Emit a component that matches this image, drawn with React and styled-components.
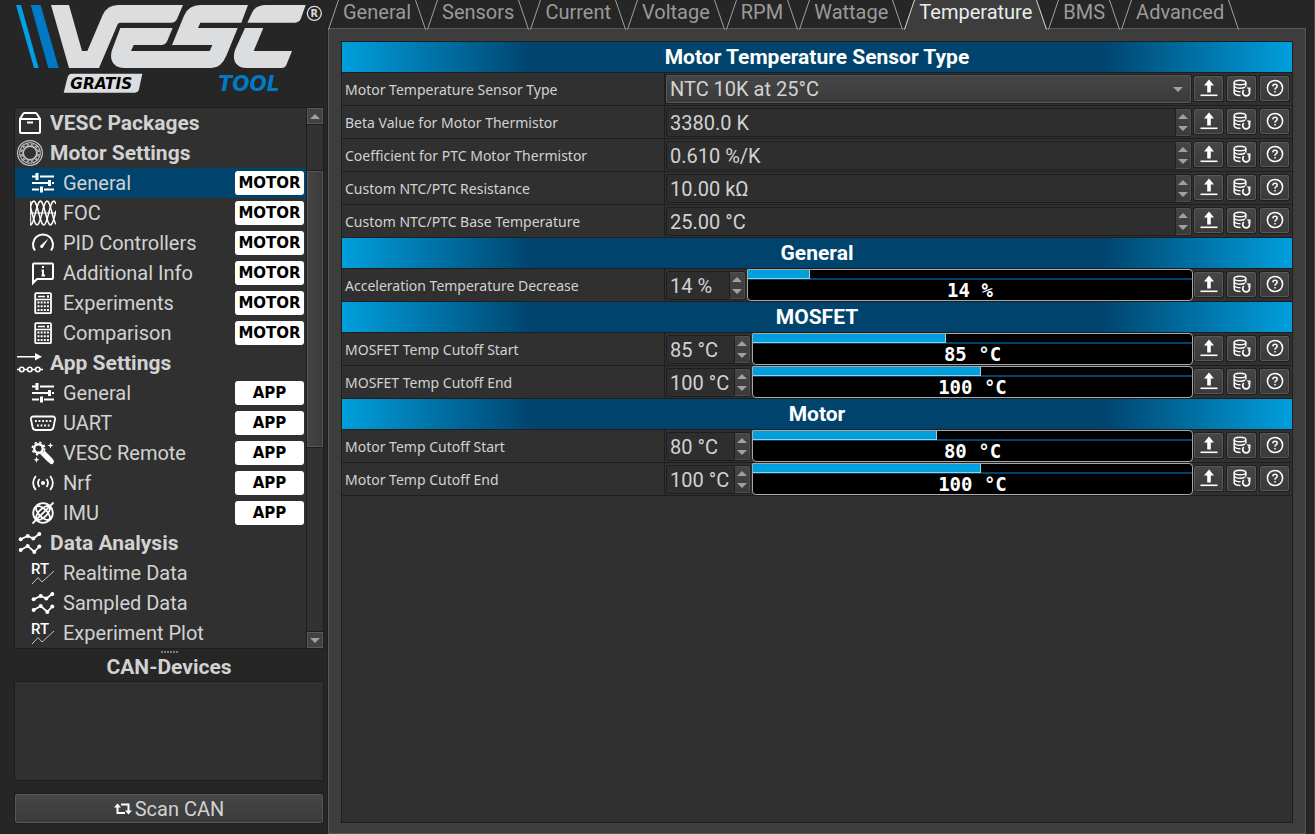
import React, { useState } from "react";
import styled, { createGlobalStyle, css } from "styled-components";

const c = {
  window: "#262626",
  pane: "#3d3d3d",
  field: "#303030",
  line: "#1e1e1e",
  edge: "#585858",
  text: "#d2d2d2",
  dim: "#9a9a9a",
  accent: "#009fdd",
  navy: "#00446e",
};

const GlobalStyle = createGlobalStyle`
  *, *::before, *::after { box-sizing: border-box; }
  body {
    margin: 0;
    background: ${c.window};
    color: ${c.text};
    font-family: Roboto, "Liberation Sans", sans-serif;
    font-size: 20px;
    line-height: 24px;
  }
  button, input, select { font: inherit; color: inherit; margin: 0; }
`;

const Window = styled.div`
  display: grid;
  grid-template-columns: 328px minmax(0, 1fr);
  min-height: 100vh;
`;

/* ---------- sidebar ---------- */

const Sidebar = styled.aside`
  display: flex;
  flex-direction: column;
  padding: 0 4px 10px 14px;
`;

const LogoLink = styled.a`
  display: block;
  height: 107px;
  svg { display: block; }
`;

const TreeFrame = styled.div`
  display: flex;
  border: 1px solid ${c.line};
  background: ${c.field};
`;

const Tree = styled.nav`
  flex: 1;
  min-width: 0;
`;

const TreeItem = styled.a`
  display: flex;
  align-items: center;
  gap: 7px;
  height: 30px;
  padding: 0 2px 0 ${(p) => (p.$top ? 2 : 15)}px;
  color: ${c.text};
  text-decoration: none;
  font-size: ${(p) => (p.$top ? 21 : 20)}px;
  font-weight: ${(p) => (p.$top ? 700 : 400)};
  background: ${(p) => (p.$active ? c.navy : "transparent")};
  svg { flex: none; }
`;

const TreeText = styled.span`
  flex: 1;
  white-space: nowrap;
`;

const Badge = styled.span`
  width: 69px;
  height: 24px;
  border-radius: 3px;
  background: #fff;
  color: #000;
  font: 700 15px/24px "DejaVu Sans", sans-serif;
  text-align: center;
`;

const ScrollBar = styled.div`
  display: flex;
  flex-direction: column;
  width: 17px;
  border-left: 1px solid ${c.line};
  background: #323232;
`;

const ScrollArrow = styled.button`
  display: grid;
  place-items: center;
  height: 16px;
  padding: 0;
  border: 1px solid ${c.edge};
  background: #424242;
`;

const ScrollTrack = styled.div`
  flex: 1;
  display: flex;
  flex-direction: column;
  padding-top: 46px;
  border: solid ${c.line};
  border-width: 1px 0;
`;

const ScrollThumb = styled.div`
  height: 60%;
  border: 1px solid ${c.edge};
  background: linear-gradient(90deg, #454545, #3b3b3b);
  box-shadow: 0 1px 0 ${c.line}, 0 -1px 0 ${c.line};
`;

const Splitter = styled.div`
  align-self: center;
  width: 17px;
  height: 2px;
  margin: 2px 0;
  background: repeating-linear-gradient(90deg, #7c7c7c 0 2px, transparent 2px 3px);
`;

const CanTitle = styled.h2`
  margin: 0;
  padding-bottom: 2px;
  font-size: 21px;
  line-height: 24px;
  text-align: center;
`;

const CanList = styled.div`
  flex: 1;
  min-height: 80px;
  margin-bottom: 12px;
  border: 1px solid ${c.line};
  background: ${c.field};
`;

const raised = css`
  border: 1px solid ${c.edge};
  border-radius: 2px;
  background: linear-gradient(#464646, #3a3a3a);
  box-shadow: 0 0 0 1px ${c.line};
`;

const ScanButton = styled.button`
  ${raised}
  display: flex;
  align-items: center;
  justify-content: center;
  gap: 3px;
  height: 29px;
  margin: 1px;
  padding: 0;
`;

/* ---------- tabs ---------- */

const Main = styled.main`
  display: flex;
  flex-direction: column;
  padding-right: 8px;
  border-right: 1px solid #4a4a4a;
`;

const TabBar = styled.div`
  display: flex;
  gap: 1px;
  height: 29px;
  position: relative;
  margin-bottom: -1px;
`;

const TabButton = styled.button`
  display: flex;
  height: 30px;
  padding: 0;
  border: 0;
  background: none;
  color: ${(p) => (p.$active ? "#ececec" : c.dim)};
  svg { flex: none; }
`;

const TabText = styled.span`
  height: 30px;
  padding: 0 4px 6px;
  background: ${(p) => (p.$active ? c.pane : "transparent")};
`;

const Pane = styled.div`
  flex: 1;
  display: flex;
  padding: 12px 12px 10px;
  border: 1px solid ${c.edge};
  background: ${c.pane};
  box-shadow: 1px 0 0 ${c.line}, -1px 0 0 ${c.line};
`;

const Sheet = styled.div`
  flex: 1;
  min-width: 0;
  border: 1px solid ${c.line};
  background: ${c.field};
`;

/* ---------- parameter rows ---------- */

const GroupHeader = styled.h3`
  height: 31px;
  margin: 0;
  border-bottom: 1px solid ${c.line};
  background: linear-gradient(90deg, ${c.accent}, ${c.navy} 20%, ${c.navy} 80%, ${c.accent});
  color: #fff;
  font-size: 21px;
  line-height: 30px;
  text-align: center;
`;

const Row = styled.div`
  display: grid;
  grid-template-columns: 323px minmax(0, 1fr) 99px;
  height: 33px;
  border-bottom: 1px solid ${c.line};
`;

const RowLabel = styled.label`
  padding: 1px 0 0 3px;
  border-right: 1px solid ${c.line};
  font: 14px/31px "Noto Sans", "Open Sans", sans-serif;
`;

const Editor = styled.div`
  display: flex;
  align-items: center;
  padding-left: 1px;
`;

const SelectWrap = styled.div`
  ${raised}
  flex: 1;
  display: grid;
  align-items: center;
  height: 28px;
  margin-right: 2px;
  > * { grid-area: 1 / 1; }
  svg { justify-self: end; margin-right: 7px; pointer-events: none; }
`;

const SelectBox = styled.select`
  width: 100%;
  height: 26px;
  padding: 0 3px;
  border: 0;
  background: transparent;
  appearance: none;
`;

const SpinFrame = styled.div`
  display: flex;
  flex: ${(p) => (p.$width ? `0 0 ${p.$width}px` : "1")};
  min-width: 0;
  height: 29px;
  margin: 1px 1px 0 0;
  border: 1px solid ${c.line};
  border-radius: 3px;
  background: #2e2e2e;
`;

const SpinInput = styled.input`
  flex: 1;
  width: 100%;
  min-width: 0;
  padding: 0 0 0 3px;
  border: 0;
  background: transparent;
  outline: 0;
`;

const SpinArrows = styled.div`
  flex: none;
  display: flex;
  flex-direction: column;
  width: 16px;
  border: 1px solid #505050;
  border-left-color: ${c.line};
  border-radius: 0 2px 2px 0;
  background: linear-gradient(#454545, #3a3a3a);
`;

const SpinArrow = styled.button`
  flex: 1;
  display: grid;
  place-items: center;
  padding: 0;
  border: 0;
  background: none;
`;

const Gauge = styled.div`
  flex: 1;
  height: 32px;
  overflow: hidden;
  border: 1px solid #a8a8a8;
  border-radius: 1px 4px 4px 4px;
  background: #000;
`;

const GaugeTrack = styled.div`
  display: flex;
  height: 10px;
  border-bottom: 2px solid ${c.navy};
`;

const GaugeFill = styled.div`
  height: 9px;
  border: 1px solid #a9cbd9;
  border-width: 0 1px 1px 0;
  background: ${c.accent};
`;

const GaugeText = styled.div`
  color: #fff;
  font: 700 19px/20px "DejaVu Sans Mono", monospace;
  text-align: center;
  white-space: pre;
`;

const Tools = styled.div`
  display: flex;
  gap: 4px;
  padding: 3px 0 0 1px;
`;

const ToolButton = styled.button`
  ${raised}
  display: grid;
  place-items: center;
  width: 29px;
  height: 25px;
  padding: 0 0 1px;
`;

/* ---------- drawings ---------- */

const Stroke = ({ size = 26, w = 2, children }) => (
  <svg width={size} height={size} viewBox={`0 0 ${size} ${size}`} fill="none" stroke="#fff" strokeWidth={w} aria-hidden="true">
    {children}
  </svg>
);

const Triangle = ({ down }) => (
  <svg width="10" height="5" viewBox="0 0 10 5" aria-hidden="true">
    <path d={down ? "M0 0H10L5 5Z" : "M0 5H10L5 0Z"} fill="#a0a0a0" />
  </svg>
);

const sine = (phase) => {
  let d = "";
  for (let x = 0; x <= 26; x += 1) {
    const y = 13 - 12 * Math.sin((x / 20) * 2 * Math.PI + phase);
    d += `${x ? "L" : "M"}${x} ${y.toFixed(1)}`;
  }
  return d;
};

const icons = {
  box: (
    <Stroke>
      <path d="M3 9V22Q3 23 4 23H22Q23 23 23 22V9ZM3 9L6 4Q6.500 3 7.500 3H18.500Q19.500 3 20 4L23 9M10 12.500H16" />
    </Stroke>
  ),
  stator: (
    <Stroke w={1}>
      <g stroke="#c4c4c4">
        <circle cx="13" cy="13" r="12.400" strokeWidth="1.200" />
        <circle cx="13" cy="13" r="6.600" strokeWidth="1.200" />
        {Array.from({ length: 12 }, (_, i) => (
          <path key={i} d="M10.800 2.800H15.200L14 6H12Z" transform={`rotate(${i * 30} 13 13)`} />
        ))}
      </g>
    </Stroke>
  ),
  sliders: (
    <Stroke>
      <path d="M2 6.500H6M10 6.500H24M2 13H17M22 13H24M2 19.500H9M14 19.500H24" />
      <path d="M7 3V10M19.500 10V16M11.500 16.500V22.500" strokeWidth="3" />
      <path d="M17 13H20" />
    </Stroke>
  ),
  waves: (
    <Stroke w={1.5}>
      <path d={sine(0.4)} />
      <path d={sine(0.4 + 2.094)} />
      <path d={sine(0.4 + 4.189)} />
      <path d="M.700 1V25M0 13H26" strokeWidth="1" />
    </Stroke>
  ),
  gauge: (
    <Stroke>
      <path d="M5 20.500A10 10 0 1 1 21 20.500" />
      <path d="M10.500 15.500L18.500 8.500L12.800 17.500Q11.500 18.500 10.600 17.500Q9.900 16.500 10.500 15.500Z" fill="#fff" stroke="none" />
    </Stroke>
  ),
  info: (
    <Stroke>
      <path d="M3 23V4.500Q3 3.500 4 3.500H22Q23 3.500 23 4.500V18Q23 19 22 19H7Z" />
      <path d="M13 6V8M11.500 10.500H13V15M11.500 15.500H15" />
    </Stroke>
  ),
  calculator: (
    <Stroke>
      <rect x="5.200" y="3.200" width="15.800" height="20" rx="1" strokeWidth="1.800" />
      <path d="M5 9.500H21M8 6.500H15" strokeWidth="1.400" />
      <path d="M17 6.500H19" strokeWidth="2.400" />
      <path d="M7.500 12.500H19M7.500 16.200H19M7.500 19.900H19" strokeWidth="2" strokeDasharray="2 1.150" />
    </Stroke>
  ),
  flow: (
    <Stroke w={1.6}>
      <path d="M0 6.700H20M0 19.500H2.500M7 19.500H10.500M15 19.500H18.500M23 19.500H26" />
      <path d="M18 3L25 6.700L18 10.500Z" fill="#fff" stroke="none" />
      <circle cx="4.800" cy="19.500" r="2.200" />
      <circle cx="12.800" cy="19.500" r="2.200" />
      <circle cx="20.800" cy="19.500" r="2.200" />
    </Stroke>
  ),
  port: (
    <Stroke w={1.8}>
      <path d="M3.500 6.500H22.500Q25.500 6.500 25 9.500L23.500 17Q23 20 20 20H6Q3 20 2.500 17L1 9.500Q.500 6.500 3.500 6.500Z" />
      <path d="M5 11H21.500" strokeDasharray="1.800 1.800" />
      <path d="M7 15.500H19.500" strokeDasharray="1.800 1.800" />
    </Stroke>
  ),
  wand: (
    <Stroke>
      <circle cx="8.500" cy="8.500" r="4.300" strokeWidth="2.400" />
      <circle cx="8.500" cy="8.500" r="6.200" strokeWidth="1.600" strokeDasharray="2.400 2.470" />
      <path d="M12.500 12.500L20.500 20.500" strokeWidth="5.500" />
      <path d="M20.500 20.500L21.500 21.500" strokeWidth="5" strokeLinecap="round" />
      <path d="M20.500 2.500L21.300 4.700L23.500 5.500L21.300 6.300L20.500 8.500L19.700 6.300L17.500 5.500L19.700 4.700ZM6.500 16.500L7.300 18.900L9.500 19.700L7.300 20.500L6.500 23L5.700 20.500L3.500 19.700L5.700 18.900Z" fill="#fff" stroke="none" />
    </Stroke>
  ),
  radio: (
    <Stroke w={1.8}>
      <circle cx="13" cy="13" r="2" fill="#fff" stroke="none" />
      <path d="M9.500 9Q6.500 13 9.500 17M16.500 9Q19.500 13 16.500 17M5.800 6Q.500 13 5.800 20M20.200 6Q25.500 13 20.200 20" />
    </Stroke>
  ),
  gyro: (
    <Stroke w={1.8}>
      <circle cx="13" cy="13" r="9.800" />
      <ellipse cx="13" cy="13" rx="9" ry="4" transform="rotate(45 13 13)" />
      <ellipse cx="13" cy="13" rx="9" ry="4" transform="rotate(-45 13 13)" />
      <path d="M2.500 23.500L23.500 2.500" />
    </Stroke>
  ),
  lines: (
    <Stroke w={1.8}>
      <path d="M3.700 9.300L10.700 6L16.300 8.500L22.300 4M3.700 20L10.700 16L17.300 21.800L22.300 16.500" />
      <g fill="#fff" stroke="none">
        {[[3.7, 9.3], [10.7, 6], [16.3, 8.5], [22.3, 4], [3.7, 20], [10.7, 16], [17.3, 22], [22.3, 16.5]].map(([x, y]) => (
          <circle key={x + "-" + y} cx={x} cy={y} r="2" />
        ))}
      </g>
    </Stroke>
  ),
  realtime: (
    <Stroke w={1}>
      <text x="1" y="14" fill="#fff" stroke="none" fontFamily="Roboto, sans-serif" fontWeight="500" fontSize="15">RT</text>
      <path d="M2 24L8 17.700L12 22L24 11" stroke="#c0c0c0" />
    </Stroke>
  ),
};

const UploadIcon = () => (
  <Stroke size={18} w={1.6}>
    <path d="M9 .500L14 6.500H10.800V13.500H7.200V6.500H4Z" fill="#fff" stroke="none" />
    <path d="M.500 16.300H17.500" />
  </Stroke>
);

const RestoreIcon = () => (
  <Stroke size={18} w={1.5}>
    <ellipse cx="7" cy="3.500" rx="5.800" ry="2.300" />
    <path d="M1.200 3.500V14Q2 16.500 7.500 16.500M12.800 3.500V7.500M1.200 7Q2.500 9.300 7 9.300Q10 9.300 12 8M1.200 10.500Q2.500 12.800 7.500 12.800" />
    <path d="M10.800 11A3.400 3.400 0 1 0 15.500 11" strokeWidth="1.700" />
    <path d="M13.500 8.500H17.500V12.500Z" fill="#fff" stroke="none" />
  </Stroke>
);

const HelpIcon = () => (
  <Stroke size={18} w={1.5}>
    <circle cx="9" cy="9" r="7.600" />
    <path d="M6.800 7.400Q6.900 5.200 9 5.200Q11.200 5.200 11.200 7.100Q11.200 8.200 10 8.900Q9 9.500 9 10.800M9 12V13.600" />
  </Stroke>
);

const ScanIcon = () => (
  <svg width="18" height="12" viewBox="0 0 18 12" fill="none" stroke="#fff" strokeWidth="2" aria-hidden="true">
    <path d="M3.500 3V10H11M7 1.500H14.500V8.500" />
    <path d="M0 4.500L3.500 .500L7 4.500ZM11 7.500H18L14.500 11.500Z" fill="#fff" stroke="none" />
  </svg>
);

const Slant = ({ side, active }) => {
  const left = side === "left";
  return (
    <svg width="11" height="30" viewBox="0 0 11 30" aria-hidden="true">
      {active && <path d={left ? "M.500 30L10.500 0H11V30Z" : "M0 0H.500L10.500 30H0Z"} fill={c.pane} />}
      <path d={left ? "M.500 29.500L10.500 0" : "M.500 0L10.500 29.500"} stroke={active ? "#dcdcdc" : "#a0a0a0"} strokeWidth="1" />
    </svg>
  );
};

const Logo = () => (
  <svg width="312" height="100" viewBox="42 0 936 300" role="img" aria-label="VESC Tool">
    <path d="M48 15H63L116 204H102Z" fill="#00a0e4" />
    <path d="M92 15H122L176 204H145Z" fill="#007ac6" />
    <g fill="#dcdddf">
      <path d="M153 15H207L246 153H262L308 45Q322 15 354 15H549L531 57Q526 68 514 68H360Q355 68 353 73L297 204H207Z" />
      <path d="M361 84H518L502 122Q496 135 484 135H401L393 153H629L637 135H516L552 47Q566 15 600 15H744L724 68H601L594 84H713L680 165Q664 204 634 204H372C340 204 325 178 338 145Z" />
      <path d="M742 68L756 38Q767 15 798 15H917L903 55Q898 68 885 68Z" />
      <path d="M735 84H790L761 153H876L859 195Q855 204 845 204H740C708 204 694 180 706 148Z" />
      <path d="M203 231Q206 221 215 221H427L417 268Q414 278 405 278H191Z" />
    </g>
    <circle cx="943" cy="40" r="21" fill="none" stroke="#dcdddf" strokeWidth="4" />
    <g fontFamily="'DejaVu Sans', sans-serif" fontWeight="700">
      <text x="943" y="51" fontSize="29" textAnchor="middle" fill="#dcdddf">R</text>
      <text x="211" y="266" fontSize="46" fontStyle="italic" fill="#000">GRATIS</text>
      <text x="655" y="272" fontSize="61" fontStyle="italic" fill="#007ac6">TOOL</text>
    </g>
  </svg>
);

/* ---------- content ---------- */

const tree = [
  { icon: "box", text: "VESC Packages", top: true },
  { icon: "stator", text: "Motor Settings", top: true },
  { icon: "sliders", text: "General", badge: "MOTOR", active: true },
  { icon: "waves", text: "FOC", badge: "MOTOR" },
  { icon: "gauge", text: "PID Controllers", badge: "MOTOR" },
  { icon: "info", text: "Additional Info", badge: "MOTOR" },
  { icon: "calculator", text: "Experiments", badge: "MOTOR" },
  { icon: "calculator", text: "Comparison", badge: "MOTOR" },
  { icon: "flow", text: "App Settings", top: true },
  { icon: "sliders", text: "General", badge: "APP" },
  { icon: "port", text: "UART", badge: "APP" },
  { icon: "wand", text: "VESC Remote", badge: "APP" },
  { icon: "radio", text: "Nrf", badge: "APP" },
  { icon: "gyro", text: "IMU", badge: "APP" },
  { icon: "lines", text: "Data Analysis", top: true },
  { icon: "realtime", text: "Realtime Data" },
  { icon: "lines", text: "Sampled Data" },
  { icon: "realtime", text: "Experiment Plot" },
];

const tabs = ["General", "Sensors", "Current", "Voltage", "RPM", "Wattage", "Temperature", "BMS", "Advanced"];

const groups = [
  {
    title: "Motor Temperature Sensor Type",
    rows: [
      { id: "sensor", label: "Motor Temperature Sensor Type", options: ["NTC 10K at 25°C"] },
      { id: "beta", label: "Beta Value for Motor Thermistor", value: "3380.0 K" },
      { id: "coeff", label: "Coefficient for PTC Motor Thermistor", value: "0.610 %/K" },
      { id: "res", label: "Custom NTC/PTC Resistance", value: "10.00 kΩ" },
      { id: "base", label: "Custom NTC/PTC Base Temperature", value: "25.00 °C" },
    ],
  },
  {
    title: "General",
    rows: [{ id: "acc", label: "Acceleration Temperature Decrease", value: "14 %", width: 80, fill: 14 }],
  },
  {
    title: "MOSFET",
    rows: [
      { id: "fet-start", label: "MOSFET Temp Cutoff Start", value: "85 °C", width: 85, fill: 44 },
      { id: "fet-end", label: "MOSFET Temp Cutoff End", value: "100 °C", width: 85, fill: 52 },
    ],
  },
  {
    title: "Motor",
    rows: [
      { id: "mot-start", label: "Motor Temp Cutoff Start", value: "80 °C", width: 85, fill: 42 },
      { id: "mot-end", label: "Motor Temp Cutoff End", value: "100 °C", width: 85, fill: 52 },
    ],
  },
];

const SpinBox = ({ id, value, width }) => (
  <SpinFrame $width={width}>
    <SpinInput id={id} type="text" defaultValue={value} />
    <SpinArrows>
      <SpinArrow type="button" aria-label="Increase"><Triangle /></SpinArrow>
      <SpinArrow type="button" aria-label="Decrease"><Triangle down /></SpinArrow>
    </SpinArrows>
  </SpinFrame>
);

const ParamRow = ({ id, label, options, value, width, fill }) => (
  <Row>
    <RowLabel htmlFor={id}>{label}</RowLabel>
    <Editor>
      {options ? (
        <SelectWrap>
          <SelectBox id={id}>
            {options.map((o) => <option key={o}>{o}</option>)}
          </SelectBox>
          <Triangle down />
        </SelectWrap>
      ) : (
        <SpinBox id={id} value={value} width={width} />
      )}
      {fill !== undefined && (
        <Gauge role="meter" aria-label={label} aria-valuenow={fill}>
          <GaugeTrack><GaugeFill style={{ width: `${fill}%` }} /></GaugeTrack>
          <GaugeText>{value}</GaugeText>
        </Gauge>
      )}
    </Editor>
    <Tools>
      <ToolButton type="button" aria-label="Read current value"><UploadIcon /></ToolButton>
      <ToolButton type="button" aria-label="Read default value"><RestoreIcon /></ToolButton>
      <ToolButton type="button" aria-label="Help"><HelpIcon /></ToolButton>
    </Tools>
  </Row>
);

export default function App() {
  const [tab, setTab] = useState("Temperature");
  return (
    <>
      <GlobalStyle />
      <Window>
        <Sidebar>
          <LogoLink href="#home"><Logo /></LogoLink>
          <TreeFrame>
            <Tree>
              {tree.map((item, i) => (
                <TreeItem key={i} href={`#page-${i}`} $top={item.top} $active={item.active}>
                  {icons[item.icon]}
                  <TreeText>{item.text}</TreeText>
                  {item.badge && <Badge>{item.badge}</Badge>}
                </TreeItem>
              ))}
            </Tree>
            <ScrollBar>
              <ScrollArrow type="button" aria-label="Scroll up"><Triangle /></ScrollArrow>
              <ScrollTrack><ScrollThumb /></ScrollTrack>
              <ScrollArrow type="button" aria-label="Scroll down"><Triangle down /></ScrollArrow>
            </ScrollBar>
          </TreeFrame>
          <Splitter />
          <CanTitle>CAN-Devices</CanTitle>
          <CanList />
          <ScanButton type="button"><ScanIcon />Scan CAN</ScanButton>
        </Sidebar>
        <Main>
          <TabBar role="tablist">
            {tabs.map((t) => (
              <TabButton key={t} type="button" role="tab" aria-selected={t === tab} $active={t === tab} onClick={() => setTab(t)}>
                <Slant side="left" active={t === tab} />
                <TabText $active={t === tab}>{t}</TabText>
                <Slant side="right" active={t === tab} />
              </TabButton>
            ))}
          </TabBar>
          <Pane>
            <Sheet>
              {groups.map((g) => (
                <section key={g.title}>
                  <GroupHeader>{g.title}</GroupHeader>
                  {g.rows.map((r) => <ParamRow key={r.id} {...r} />)}
                </section>
              ))}
            </Sheet>
          </Pane>
        </Main>
      </Window>
    </>
  );
}
